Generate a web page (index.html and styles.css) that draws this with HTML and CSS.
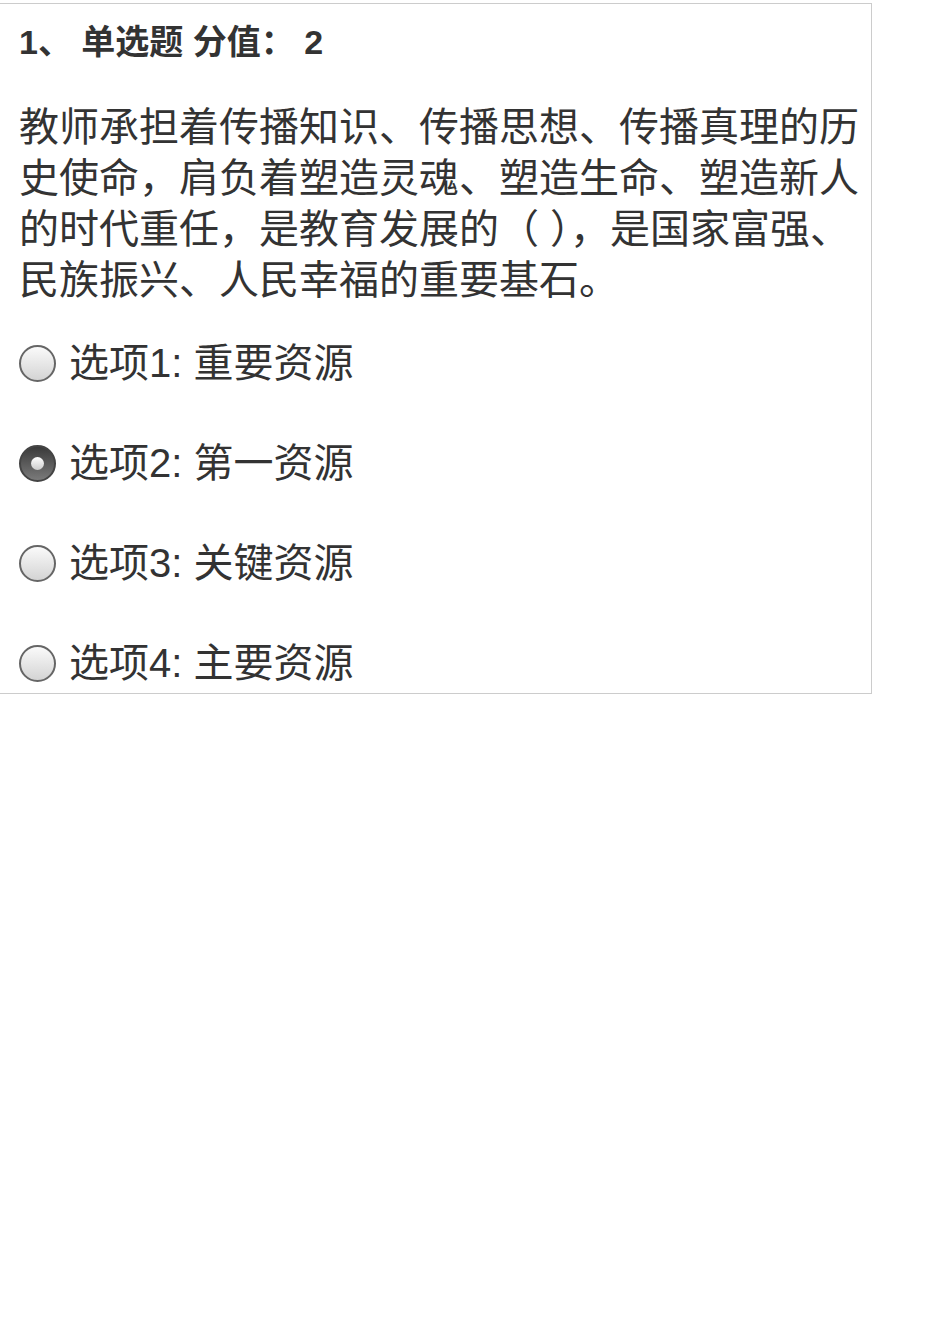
FILE: index.html
```html
<!DOCTYPE html>
<html lang="zh-CN">
  <head>
    <meta charset="UTF-8" />
    <meta name="viewport" content="width=device-width, initial-scale=1.0" />
    <title>单选题</title>
    <link rel="stylesheet" href="styles.css">
  </head>
  <body>
    <div class="question-card">
      <h2 class="question-title">1、 单选题 分值： 2</h2>

      <p class="question-text">教师承担着传播知识、传播思想、传播真理的历史使命，肩负着塑造灵魂、塑造生命、塑造新人的时代重任，是教育发展的（ ），是国家富强、民族振兴、人民幸福的重要基石。</p>

      <div class="options">
        <label class="option"><input type="radio" name="q1" value="1" /><span>选项1: 重要资源</span></label>
        <label class="option"><input type="radio" name="q1" value="2" checked /><span>选项2: 第一资源</span></label>
        <label class="option"><input type="radio" name="q1" value="3" /><span>选项3: 关键资源</span></label>
        <label class="option"><input type="radio" name="q1" value="4" /><span>选项4: 主要资源</span></label>
      </div>
    </div>
  </body>
</html>
```

FILE: styles.css
```css
* {
  box-sizing: border-box;
  margin: 0;
  padding: 0;
}

body {
  font-family: "Liberation Sans", "Noto Sans CJK SC", sans-serif;
  color: #333;
  background-color: #fff;
}

.question-card {
  width: 873px;
  margin: 3px 0 0 -1px;
  padding: 18px 6px 0 19px;
  border: 1px solid #ccc;
}

.question-title {
  font-size: 34px;
  line-height: 40px;
  font-weight: bold;
}

.question-text {
  margin-top: 40px;
  font-size: 40px;
  line-height: 51px;
}

.options {
  margin-top: 27px;
}

.option {
  display: flex;
  align-items: center;
  gap: 13px;
  height: 60px;
  margin-bottom: 40px;
  font-size: 40px;
  line-height: 60px;
}

.option:last-child {
  margin-bottom: 0;
}

.option input[type="radio"] {
  appearance: none;
  -webkit-appearance: none;
  flex-shrink: 0;
  width: 37px;
  height: 37px;
  border-radius: 50%;
  border: 2px solid #666;
  background: linear-gradient(#fafafa, #d4d4d4);
  margin: 0;
  position: relative;
}

.option input[type="radio"]:checked {
  border-color: #444;
  background: linear-gradient(#3a3a3a, #7a7a7a);
}

.option input[type="radio"]:checked::after {
  content: "";
  position: absolute;
  left: 50%;
  top: 50%;
  width: 13px;
  height: 13px;
  margin: -6.5px 0 0 -6.5px;
  border-radius: 50%;
  background: linear-gradient(#fff, #ccc);
}
```
